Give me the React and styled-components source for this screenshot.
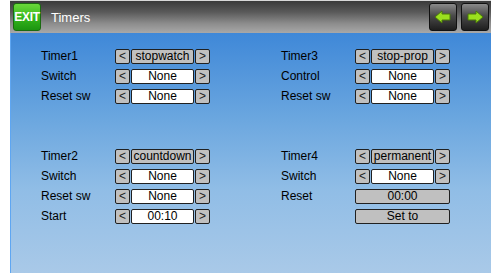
import React from "react";
import styled, { createGlobalStyle } from "styled-components";

const GlobalStyle = createGlobalStyle`
  html, body {
    margin: 0;
    padding: 0;
    background: #ffffff;
    overflow: hidden;
  }
  body {
    font-family: "Liberation Sans", Arial, sans-serif;
  }
`;

const Page = styled.div`
  width: 491px;
  height: 273px;
  padding-left: 10px;
  box-sizing: border-box;
  display: flex;
  flex-direction: column;
`;

const Header = styled.div`
  height: 33px;
  display: flex;
  align-items: center;
  padding: 0 2px 0 3px;
  border-top: 1px solid #d8d8d8;
  box-sizing: border-box;
  background: linear-gradient(to bottom, #3a3a3a 0%, #5a5a5a 35%, #8c8c8c 70%, #a8a8a8 100%);
`;

const ExitButton = styled.div`
  width: 28px;
  height: 28px;
  border-radius: 3px;
  background: linear-gradient(to bottom, #6ad83a 0%, #34b51c 55%, #1c9410 100%);
  border: 1px solid #1a6a10;
  box-sizing: border-box;
  color: #ffffff;
  font-weight: bold;
  font-size: 12px;
  letter-spacing: -0.3px;
  display: flex;
  align-items: center;
  justify-content: center;
`;

const Title = styled.div`
  margin-left: 10px;
  color: #ffffff;
  font-size: 13px;
  flex: 1;
`;

const NavButton = styled.div`
  width: 28px;
  height: 28px;
  margin-left: 4px;
  border-radius: 3px;
  border: 1px solid #101010;
  box-sizing: border-box;
  background: linear-gradient(to bottom, #8a8a8a 0%, #4a4a4a 45%, #1e1e1e 100%);
  display: flex;
  align-items: center;
  justify-content: center;
`;

const Body = styled.div`
  flex: 1;
  border-left: 1px solid #5ea6f2;
  background: linear-gradient(to bottom, #3f88d8 0%, #6aa6df 35%, #90bde6 65%, #a9c9e8 100%);
  padding: 16px 0 0 30px;
  display: flex;
  flex-direction: column;
`;

const Group = styled.div`
  display: grid;
  grid-template-columns: 240px 1fr;
  height: 100px;
`;

const Column = styled.div`
  display: flex;
  flex-direction: column;
`;

const Row = styled.div`
  display: flex;
  height: 20px;
  align-items: flex-start;
`;

const Label = styled.div`
  width: 74px;
  height: 15px;
  line-height: 15px;
  font-size: 12px;
  color: #000000;
`;

const Spin = styled.div`
  display: flex;
  gap: 1px;
  width: 95px;
`;

const Box = styled.div`
  height: 15px;
  box-sizing: border-box;
  border: 1px solid #202020;
  border-radius: 2px;
  background: ${(p) => (p.$light ? "#ffffff" : "#c0c0c0")};
  width: ${(p) => p.$w}px;
  font-size: 12px;
  line-height: 13px;
  color: #000000;
  text-align: center;
  white-space: nowrap;
  overflow: hidden;
`;

const ArrowGlyph = styled.span`
  font-size: 12px;
  line-height: 13px;
  color: #202020;
`;

function Arrow({ dir }) {
  return (
    <svg width="18" height="14" viewBox="0 0 18 14">
      <path
        d={
          dir === "left"
            ? "M1 7 L8 1 L8 4 L16 4 L16 10 L8 10 L8 13 Z"
            : "M17 7 L10 1 L10 4 L2 4 L2 10 L10 10 L10 13 Z"
        }
        fill="#9be01e"
        stroke="#4a7a08"
        strokeWidth="1"
        strokeLinejoin="round"
      />
    </svg>
  );
}

function Select({ value, light }) {
  return (
    <Spin>
      <Box $w={15}>
        <ArrowGlyph>&lt;</ArrowGlyph>
      </Box>
      <Box $w={63} $light={light}>
        {value}
      </Box>
      <Box $w={15}>
        <ArrowGlyph>&gt;</ArrowGlyph>
      </Box>
    </Spin>
  );
}

function Field({ label, value, light, button }) {
  return (
    <Row>
      <Label>{label}</Label>
      {button ? <Box $w={95}>{value}</Box> : <Select value={value} light={light} />}
    </Row>
  );
}

export default function App() {
  return (
    <>
      <GlobalStyle />
      <Page>
        <Header>
          <ExitButton>EXIT</ExitButton>
          <Title>Timers</Title>
          <NavButton>
            <Arrow dir="left" />
          </NavButton>
          <NavButton>
            <Arrow dir="right" />
          </NavButton>
        </Header>
        <Body>
          <Group>
            <Column>
              <Field label="Timer1" value="stopwatch" />
              <Field label="Switch" value="None" light />
              <Field label="Reset sw" value="None" light />
            </Column>
            <Column>
              <Field label="Timer3" value="stop-prop" />
              <Field label="Control" value="None" light />
              <Field label="Reset sw" value="None" light />
            </Column>
          </Group>
          <Group>
            <Column>
              <Field label="Timer2" value="countdown" />
              <Field label="Switch" value="None" light />
              <Field label="Reset sw" value="None" light />
              <Field label="Start" value="00:10" light />
            </Column>
            <Column>
              <Field label="Timer4" value="permanent" />
              <Field label="Switch" value="None" light />
              <Field label="Reset" value="00:00" button />
              <Field label="" value="Set to" button />
            </Column>
          </Group>
        </Body>
      </Page>
    </>
  );
}
